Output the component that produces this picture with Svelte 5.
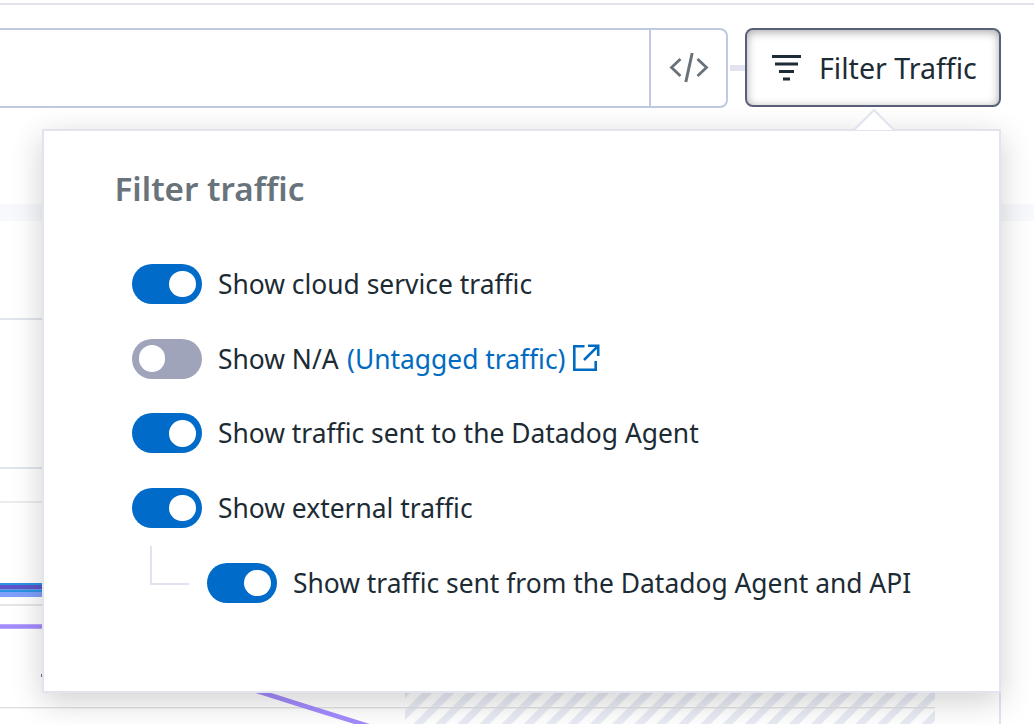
<script>
  const filters = $state([
    { label: 'Show cloud service traffic', on: true },
    { label: 'Show N/A', link: '(Untagged traffic)', on: false },
    { label: 'Show traffic sent to the Datadog Agent', on: true },
    { label: 'Show external traffic', on: true },
    { label: 'Show traffic sent from the Datadog Agent and API', on: true, nested: true }
  ]);
</script>

<div class="page">
  <svg class="chart" width="1034" height="724" viewBox="0 0 1034 724" aria-hidden="true">
    <defs>
      <pattern id="hatch" width="22.1" height="22.1" patternUnits="userSpaceOnUse" x="406" y="692">
        <path d="M-11.05 33.15 L33.15 -11.05 M-11.05 11.05 L11.05 -11.05 M11.05 33.15 L33.15 11.05" stroke="#e8ebf4" stroke-width="7.2" />
      </pattern>
    </defs>
    <rect x="0" y="204" width="1034" height="17" fill="#f7f9fc" />
    <rect x="0" y="318" width="1000" height="2" fill="#e1e5ec" />
    <rect x="0" y="467" width="1000" height="2" fill="#e1e5ec" />
    <rect x="0" y="501" width="935" height="2" fill="#ececec" />
    <rect x="0" y="604" width="935" height="2" fill="#e6e6e6" />
    <rect x="999" y="467" width="2" height="257" fill="#e1e4ee" />
    <rect x="405" y="480" width="530" height="244" fill="url(#hatch)" />
    <rect x="0" y="707" width="935" height="1.4" fill="#e2e2e2" />
    <rect x="0" y="583" width="60" height="2" fill="#2b92e4" />
    <rect x="0" y="585" width="60" height="4.5" fill="#5c55c9" />
    <rect x="0" y="589.5" width="60" height="2.5" fill="#2b92e4" />
    <rect x="0" y="592" width="60" height="5" fill="#7f9ffa" />
    <path d="M0 626.5 H80 L254 690 L306 706.5 L362 724 L381 730" fill="none" stroke="#a38bfd" stroke-width="4.6" />
    <rect x="41" y="674" width="2" height="3" fill="#6f6a9e" />
  </svg>

  <header>
    <div class="search">
      <div class="query"></div>
      <button class="code" aria-label="Edit as code">
        <svg width="40" height="32" viewBox="0 0 40 32" fill="none" stroke="#68727a" stroke-width="2.8">
          <path d="M11.5 8 L2.5 16.5 L11.5 25 M28.5 8 L37.5 16.5 L28.5 25" />
          <path d="M23.2 2 L16.8 31" stroke-width="3" />
        </svg>
      </button>
    </div>
    <span class="joint"></span>
    <button class="trigger">
      <svg width="30" height="26" viewBox="0 0 30 26" fill="#1c2b34">
        <path d="M0 0H29V3H0zM3 7.5H26V10.5H3zM7 15H22V18H7zM11 22.5H18V25.5H11z" />
      </svg>
      <span>Filter Traffic</span>
    </button>
  </header>

  <section class="popover">
    <svg class="caret" width="42" height="22" viewBox="0 0 42 22">
      <path d="M1 21 L21 1 L41 21" fill="#fff" stroke="#e1e4ee" stroke-width="2" />
    </svg>
    <h2>Filter traffic</h2>
    <div class="list">
      {#each filters as item}
        <div class="row" class:nested={item.nested}>
          {#if item.nested}<span class="branch"></span>{/if}
          <button class="toggle" class:on={item.on} aria-label={item.label} onclick={() => (item.on = !item.on)}>
            <span class="knob"></span>
          </button>
          <span class="label">{item.label}{#if item.link}{' '}<span class="link">{item.link}</span>{/if}</span>
          {#if item.link}
            <svg class="ext" width="28" height="28" viewBox="0 0 28 28" fill="none" stroke="#006bc2" stroke-width="2.6">
              <path d="M12.5 2.3 H2.3 V25.7 H23.7 V17" />
              <path d="M16 1.8 H26.2 V12 M25.4 2.6 L12 16" />
            </svg>
          {/if}
        </div>
      {/each}
    </div>
  </section>
</div>

<style>
  :global(body) {
    background: #fff;
    overflow: hidden;
  }
  .page {
    position: relative;
    width: 1034px;
    height: 724px;
    overflow: hidden;
    background: #fff;
    font-family: 'Noto Sans', sans-serif;
    font-variant-ligatures: none;
    color: #1c2b34;
  }
  button {
    font: inherit;
    color: inherit;
    background: none;
    border: 0;
    padding: 0;
    margin: 0;
  }
  .chart {
    position: absolute;
    inset: 0;
  }
  header {
    position: relative;
    display: flex;
    box-sizing: border-box;
    height: 108px;
    padding-top: 23px;
    align-items: flex-start;
  }
  header::before {
    content: '';
    position: absolute;
    left: 0;
    right: 0;
    top: 3px;
    height: 2px;
    background: #e1e4ea;
  }
  .search {
    display: flex;
    box-sizing: border-box;
    width: 728px;
    height: 80px;
    margin-top: 5px;
    border: 2px solid #c1c8e1;
    border-left: 0;
    border-radius: 0 8px 8px 0;
    background: #fff;
  }
  .query {
    width: 649px;
    border-right: 2px solid #c1c8e1;
  }
  .code {
    flex: 1;
    display: flex;
    align-items: center;
    justify-content: center;
    padding-bottom: 2px;
  }
  .joint {
    width: 15px;
    height: 6px;
    margin: 42px 0 0 2px;
    background: #e1e4ee;
  }
  .trigger {
    display: flex;
    align-items: center;
    gap: 17px;
    box-sizing: border-box;
    width: 256px;
    height: 79px;
    margin-top: 5px;
    padding-left: 25px;
    border: 2px solid #585f78;
    border-radius: 8px;
    background: #fff;
    box-shadow: inset 0 2px 10px rgba(0, 0, 0, 0.35);
    font-size: 28.6px;
    white-space: nowrap;
  }
  .popover {
    position: absolute;
    left: 42px;
    top: 129px;
    box-sizing: border-box;
    width: 959px;
    height: 564px;
    padding: 34px 71px;
    border: 2px solid #e1e4ee;
    background: #fff;
    box-shadow: 0 8px 30px rgba(0, 0, 0, 0.19);
  }
  .caret {
    position: absolute;
    left: 809px;
    top: -22px;
  }
  h2 {
    margin: 0 0 0 -0.5px;
    font-size: 33.2px;
    line-height: 48px;
    font-weight: 600;
    color: #68737b;
  }
  .list {
    padding: 33.6px 0 0 17px;
  }
  .row {
    position: relative;
    display: flex;
    align-items: center;
    height: 74.75px;
    font-size: 26.4px;
    white-space: nowrap;
  }
  .nested {
    padding-left: 75px;
  }
  .branch {
    position: absolute;
    left: 18px;
    top: 0;
    width: 37px;
    height: 37px;
    border-left: 2px solid #e1e4ee;
    border-bottom: 2px solid #e1e4ee;
  }
  .toggle {
    display: flex;
    align-items: center;
    box-sizing: border-box;
    width: 70px;
    height: 40px;
    margin-right: 16px;
    padding: 0 6.5px;
    border-radius: 20px;
    background: #9fa4bb;
  }
  .toggle.on {
    justify-content: flex-end;
    background: #006bc8;
  }
  .knob {
    width: 26.5px;
    height: 26.5px;
    border-radius: 50%;
    background: #fff;
  }
  .link {
    margin-left: 1.5px;
    color: #006bc2;
  }
  .ext {
    margin-left: 6.5px;
    margin-top: -1px;
  }
</style>
